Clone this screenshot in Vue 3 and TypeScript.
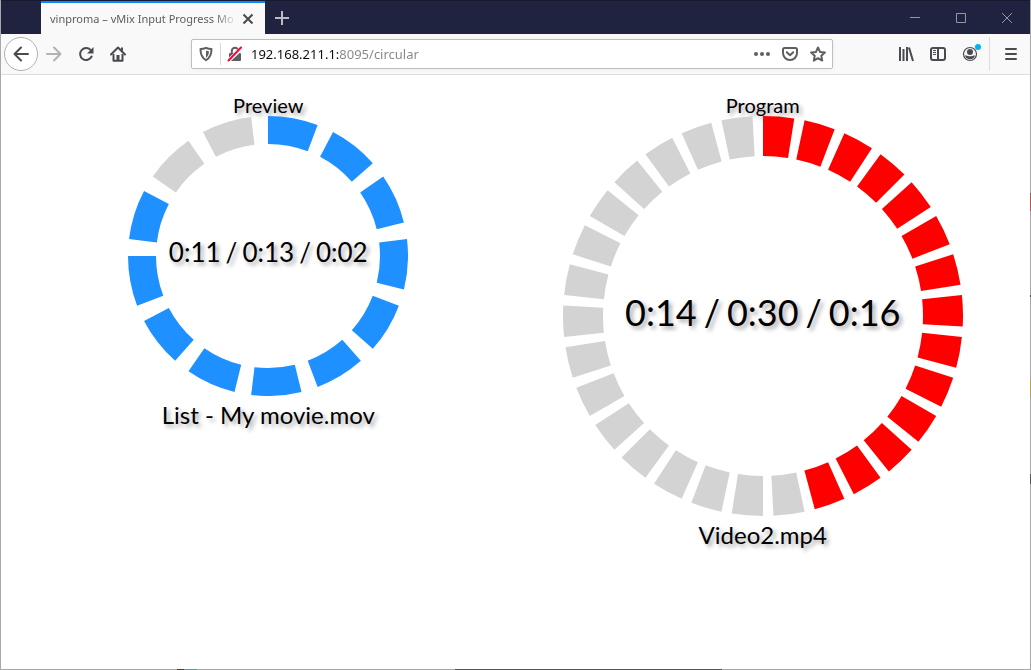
<script setup lang="ts">
import { ref } from 'vue'

interface Gauge {
  title: string
  input: string
  elapsed: number
  duration: number
  size: 'small' | 'large'
}

interface Segment {
  path: string
  filled: boolean
}

const address = ref('192.168.211.1:8095/circular')

const gauges: Gauge[] = [
  { title: 'Preview', input: 'List - My movie.mov', elapsed: 11, duration: 13, size: 'small' },
  { title: 'Program', input: 'Video2.mp4', elapsed: 14, duration: 30, size: 'large' },
]

const clock = (s: number): string => `${Math.floor(s / 60)}:${String(s % 60).padStart(2, '0')}`

const times = (g: Gauge): string[] => {
  const [elapsed, duration, remaining] = [g.elapsed, g.duration, g.duration - g.elapsed].map(clock)
  return [elapsed, '/', duration, '/', remaining]
}

function point(radius: number, turn: number): string {
  const a = turn * 2 * Math.PI
  return `${(100 + radius * Math.sin(a)).toFixed(3)} ${(100 - radius * Math.cos(a)).toFixed(3)}`
}

// One segment per second; each covers three quarters of its slot.
function segments(g: Gauge): Segment[] {
  return Array.from({ length: g.duration }, (_, i) => {
    const from = i / g.duration
    const to = (i + 0.75) / g.duration
    return {
      path: `M${point(100, from)}A100 100 0 0 1 ${point(100, to)}L${point(80, to)}A80 80 0 0 0 ${point(80, from)}Z`,
      filled: i < g.elapsed,
    }
  })
}
</script>

<template>
  <div class="window">
    <header class="titlebar">
      <div class="tab">
        <span class="tab-title">vinproma – vMix Input Progress Mo</span>
        <button class="tab-close" aria-label="Close tab">
          <svg width="12" height="12" viewBox="0 0 12 12"><path d="M1.5 1.5l9 9M10.5 1.5l-9 9" stroke="#4a4a4f" stroke-width="2" /></svg>
        </button>
      </div>
      <button class="new-tab" aria-label="New tab">
        <svg width="14" height="14" viewBox="0 0 14 14"><path d="M7 0v14M0 7h14" stroke="#bcbcc6" stroke-width="2" /></svg>
      </button>
      <div class="controls">
        <button aria-label="Minimize"><svg width="10" height="10" viewBox="0 0 10 10"><path d="M0 4.5h10" /></svg></button>
        <button aria-label="Maximize"><svg width="10" height="10" viewBox="0 0 10 10"><path d="M.5.5h9v9h-9z" /></svg></button>
        <button aria-label="Close"><svg width="10" height="10" viewBox="0 0 10 10"><path d="M0 0l10 10M10 0L0 10" /></svg></button>
      </div>
    </header>

    <nav class="toolbar">
      <button class="back" aria-label="Back">
        <svg width="16" height="16" viewBox="0 0 16 16"><path class="line" d="M1.5 8H15M8 1.5L1.5 8 8 14.5" stroke-linecap="round" stroke-linejoin="round" /></svg>
      </button>
      <button class="tool disabled" aria-label="Forward" disabled>
        <svg width="16" height="16" viewBox="0 0 16 16"><path class="line" d="M1 8h13.500M8 1.500L14.500 8 8 14.500" stroke-linecap="round" stroke-linejoin="round" /></svg>
      </button>
      <button class="tool" aria-label="Reload">
        <svg width="16" height="16" viewBox="0 0 16 16"><path class="line" d="M13 4.500A6 6 0 1 0 13.600 10.500" stroke-linecap="round" /><path d="M15.500 1v6.500H9z" /></svg>
      </button>
      <button class="tool" aria-label="Home">
        <svg width="16" height="16" viewBox="0 0 16 16"><path class="line" d="M1 8.500L8 1.500l7 7" stroke-linecap="round" stroke-linejoin="round" /><path class="line" d="M3.500 8v6.800h9V8" stroke-linejoin="round" /><path d="M6.500 9h3v6h-3zM11 1.500h2v4l-2-2z" /></svg>
      </button>

      <div class="urlbar">
        <svg width="16" height="16" viewBox="0 0 16 16"><path class="line" d="M8 1.800c2 .9 3.800 1.200 5.500 1.300 0 5-1 8.800-5.500 11.100C3.500 11.900 2.500 8.100 2.500 3.100 4.200 3 6 2.700 8 1.800z" stroke-linejoin="round" /><path d="M8 4.500c1 .4 2 .7 3 .8-.1 3-.9 5-3 6.500z" /></svg>
        <span class="divider"></span>
        <svg width="16" height="16" viewBox="0 0 16 16"><path class="line" d="M4.800 8V5a3.200 3.200 0 0 1 6.400 0v3" /><rect x="2" y="7" width="12" height="8" rx="1" /><path d="M1 15L15 2" stroke="#f9f9fa" stroke-width="4" /><path d="M1.500 14.500L14 1.500" stroke="#ff0039" stroke-width="2" stroke-linecap="round" /></svg>
        <input v-model="address" class="address" aria-label="Address" spellcheck="false" />
        <button class="action" aria-label="Page actions"><svg width="16" height="16" viewBox="0 0 16 16"><circle cx="2" cy="8" r="2" /><circle cx="8" cy="8" r="2" /><circle cx="14" cy="8" r="2" /></svg></button>
        <button class="action" aria-label="Save to Pocket"><svg width="16" height="16" viewBox="0 0 16 16"><path class="line" d="M2.500 2h11A1.500 1.500 0 0 1 15 3.500V7A7 7 0 0 1 1 7V3.500A1.500 1.500 0 0 1 2.500 2z" /><path class="line" d="M4.800 6.200L8 9.200l3.200-3" stroke-linecap="round" stroke-linejoin="round" /></svg></button>
        <button class="action" aria-label="Bookmark"><svg width="16" height="16" viewBox="0 0 16 16"><path class="line" d="M8 1.500l2 4.400 4.900.6-3.600 3.300.9 4.800L8 12.200l-4.200 2.400.9-4.800L1.100 6.500 6 5.900z" stroke-linejoin="round" /></svg></button>
      </div>

      <button class="tool" aria-label="Library">
        <svg width="16" height="16" viewBox="0 0 16 16"><path class="line" d="M2 1v14M5.500 3v12M9 1v14M11 1.500L15 15" /></svg>
      </button>
      <button class="tool" aria-label="Sidebars">
        <svg width="16" height="16" viewBox="0 0 16 16"><rect class="line" x="1" y="2" width="14" height="12" rx="2" /><path class="line" d="M8 2v12" /><path d="M3 4h3v1H3zM3 6h3v1H3zM3 8h3v1H3z" /></svg>
      </button>
      <button class="tool" aria-label="Account">
        <svg class="account" width="20" height="20" viewBox="0 0 20 20"><circle cx="10" cy="10" r="6.500" fill="none" stroke="#4a4a4f" stroke-width="1.200" /><circle cx="10" cy="8" r="3" /><path d="M5 11.500h1.500c1 1 6 1 7 0H15a5.200 5.200 0 0 1-10 0z" /><circle cx="18" cy="3" r="3" fill="#00b3f4" /></svg>
      </button>
      <span class="tool-divider"></span>
      <button class="tool" aria-label="Menu">
        <svg width="16" height="16" viewBox="0 0 16 16"><path class="line" d="M3 3h10M3 8h10M3 13h10" stroke-linecap="round" /></svg>
      </button>
    </nav>

    <main class="page">
      <section v-for="g in gauges" :key="g.title" class="gauge" :class="g.size">
        <h2 class="title">{{ g.title }}</h2>
        <div class="dial">
          <svg class="ring" viewBox="0 0 200 200" aria-hidden="true">
            <path v-for="(s, i) in segments(g)" :key="i" :d="s.path" class="segment" :class="{ filled: s.filled }" />
          </svg>
          <div class="time">
            <span v-for="(t, i) in times(g)" :key="i">{{ t }}</span>
          </div>
        </div>
        <p class="input-name">{{ g.input }}</p>
      </section>
    </main>
  </div>
</template>

<style>
body {
  margin: 0;
}
</style>

<style scoped>
.window {
  box-sizing: border-box;
  display: flex;
  flex-direction: column;
  min-height: 100vh;
  padding: 0 1px 1px;
  background:
    linear-gradient(to right, transparent 177px, #4a3a30 177px 184px, #6f8f92 184px 197px, transparent 197px 455px, #55535a 455px 722px, transparent 722px) bottom / 100% 1px no-repeat,
    linear-gradient(transparent 193px, #b5525c 193px 211px, transparent 211px 295px, #444 295px 297px, transparent 297px 379px, #b5a84a 379px 398px, transparent 398px 474px, #555 474px 484px, transparent 484px) right / 1px 100% no-repeat,
    #a8a8a8;
  font-family: "Noto Sans", "Open Sans", sans-serif;
}

button {
  display: flex;
  align-items: center;
  justify-content: center;
  flex: none;
  padding: 0;
  border: 0;
  background: none;
}

svg {
  display: block;
  flex: none;
  fill: #4a4a4f;
}

.line {
  fill: none;
  stroke: #4a4a4f;
  stroke-width: 2;
}

.titlebar {
  display: flex;
  box-sizing: border-box;
  height: 34px;
  padding-left: 40px;
  border-top: 1px solid #17192e;
  background: #202340;
}

.tab {
  display: flex;
  align-items: center;
  box-sizing: border-box;
  width: 224px;
  padding: 0 11px 0 9px;
  border-top: 2px solid #0a84ff;
  background: #f9f9fa;
}

.tab-title {
  flex: 1;
  min-width: 0;
  white-space: nowrap;
  font-size: 11px;
  line-height: 18px;
  color: #5c5c61;
  mask-image: linear-gradient(to left, transparent, #000 24px);
}

.tab-close {
  width: 12px;
  height: 12px;
  margin-left: 4px;
}

.new-tab {
  width: 34px;
}

.controls {
  display: flex;
  margin-left: auto;
}

.controls button {
  width: 46px;
}

.controls svg {
  fill: none;
  stroke: #9596a4;
}

.toolbar {
  display: flex;
  align-items: center;
  box-sizing: border-box;
  height: 41px;
  padding: 0 3px;
  border-bottom: 1px solid #dedede;
  background: #f9f9fa;
}

.back {
  box-sizing: border-box;
  width: 34px;
  height: 34px;
  border: 1px solid #b1b1b3;
  border-radius: 50%;
  background: #fff;
}

.tool {
  width: 32px;
  height: 32px;
}

.account {
  overflow: visible;
}

.disabled {
  opacity: 0.4;
}

.tool-divider {
  width: 1px;
  height: 34px;
  margin: 0 5px 0 3px;
  background: #dcdcde;
}

.urlbar {
  display: flex;
  flex: 1;
  align-items: center;
  box-sizing: border-box;
  min-width: 0;
  height: 30px;
  margin: 0 57px;
  padding: 0 6px;
  border: 1px solid #bebebe;
  border-radius: 2px;
  background: #fff;
  box-shadow: 0 1px 4px rgba(0, 0, 0, 0.05);
}

.urlbar svg {
  fill: #5f5f63;
}

.urlbar .line {
  fill: none;
  stroke: #5f5f63;
}

.divider {
  width: 1px;
  height: 22px;
  margin: 0 6px;
  background: #d7d7db;
}

.address {
  flex: 1;
  min-width: 0;
  height: 24px;
  margin-left: 8px;
  padding: 0;
  border: 0;
  outline: 0;
  font: 13px "Noto Sans", "Open Sans", sans-serif;
  color: transparent;
  caret-color: #0c0c0d;
  background: linear-gradient(to right, #0c0c0d 88px, #85858a 88px);
  background-clip: text;
}

.action {
  width: 16px;
  height: 16px;
  margin-left: 12px;
}

.page {
  display: grid;
  grid-template-columns: 1fr 1fr;
  flex: 1;
  align-items: start;
  padding: 20px;
  background: #fff;
  font-family: Lato, sans-serif;
  color: #000;
  text-shadow: 3px 3px 4px rgba(0, 0, 0, 0.35);
}

.gauge {
  display: flex;
  flex-direction: column;
  align-items: center;
}

.title {
  margin: 0;
  font-size: 20px;
  font-weight: 400;
  line-height: 21px;
}

.dial {
  display: grid;
  place-items: center;
}

.ring,
.time {
  grid-area: 1 / 1;
}

.ring {
  width: 100%;
}

.small .dial {
  width: 280px;
  font-size: 26px;
}

.large .dial {
  width: 400px;
  font-size: 36px;
}

.time {
  display: flex;
  gap: 5px;
  padding-bottom: 8px;
  line-height: 1;
  white-space: nowrap;
}

.large .time {
  gap: 7px;
}

.segment {
  fill: #d3d3d3;
}

.small .filled {
  fill: #1e90ff;
}

.large .filled {
  fill: #f00;
}

.input-name {
  margin: 4px 0 0;
  font-size: 24px;
  line-height: 30px;
}
</style>
